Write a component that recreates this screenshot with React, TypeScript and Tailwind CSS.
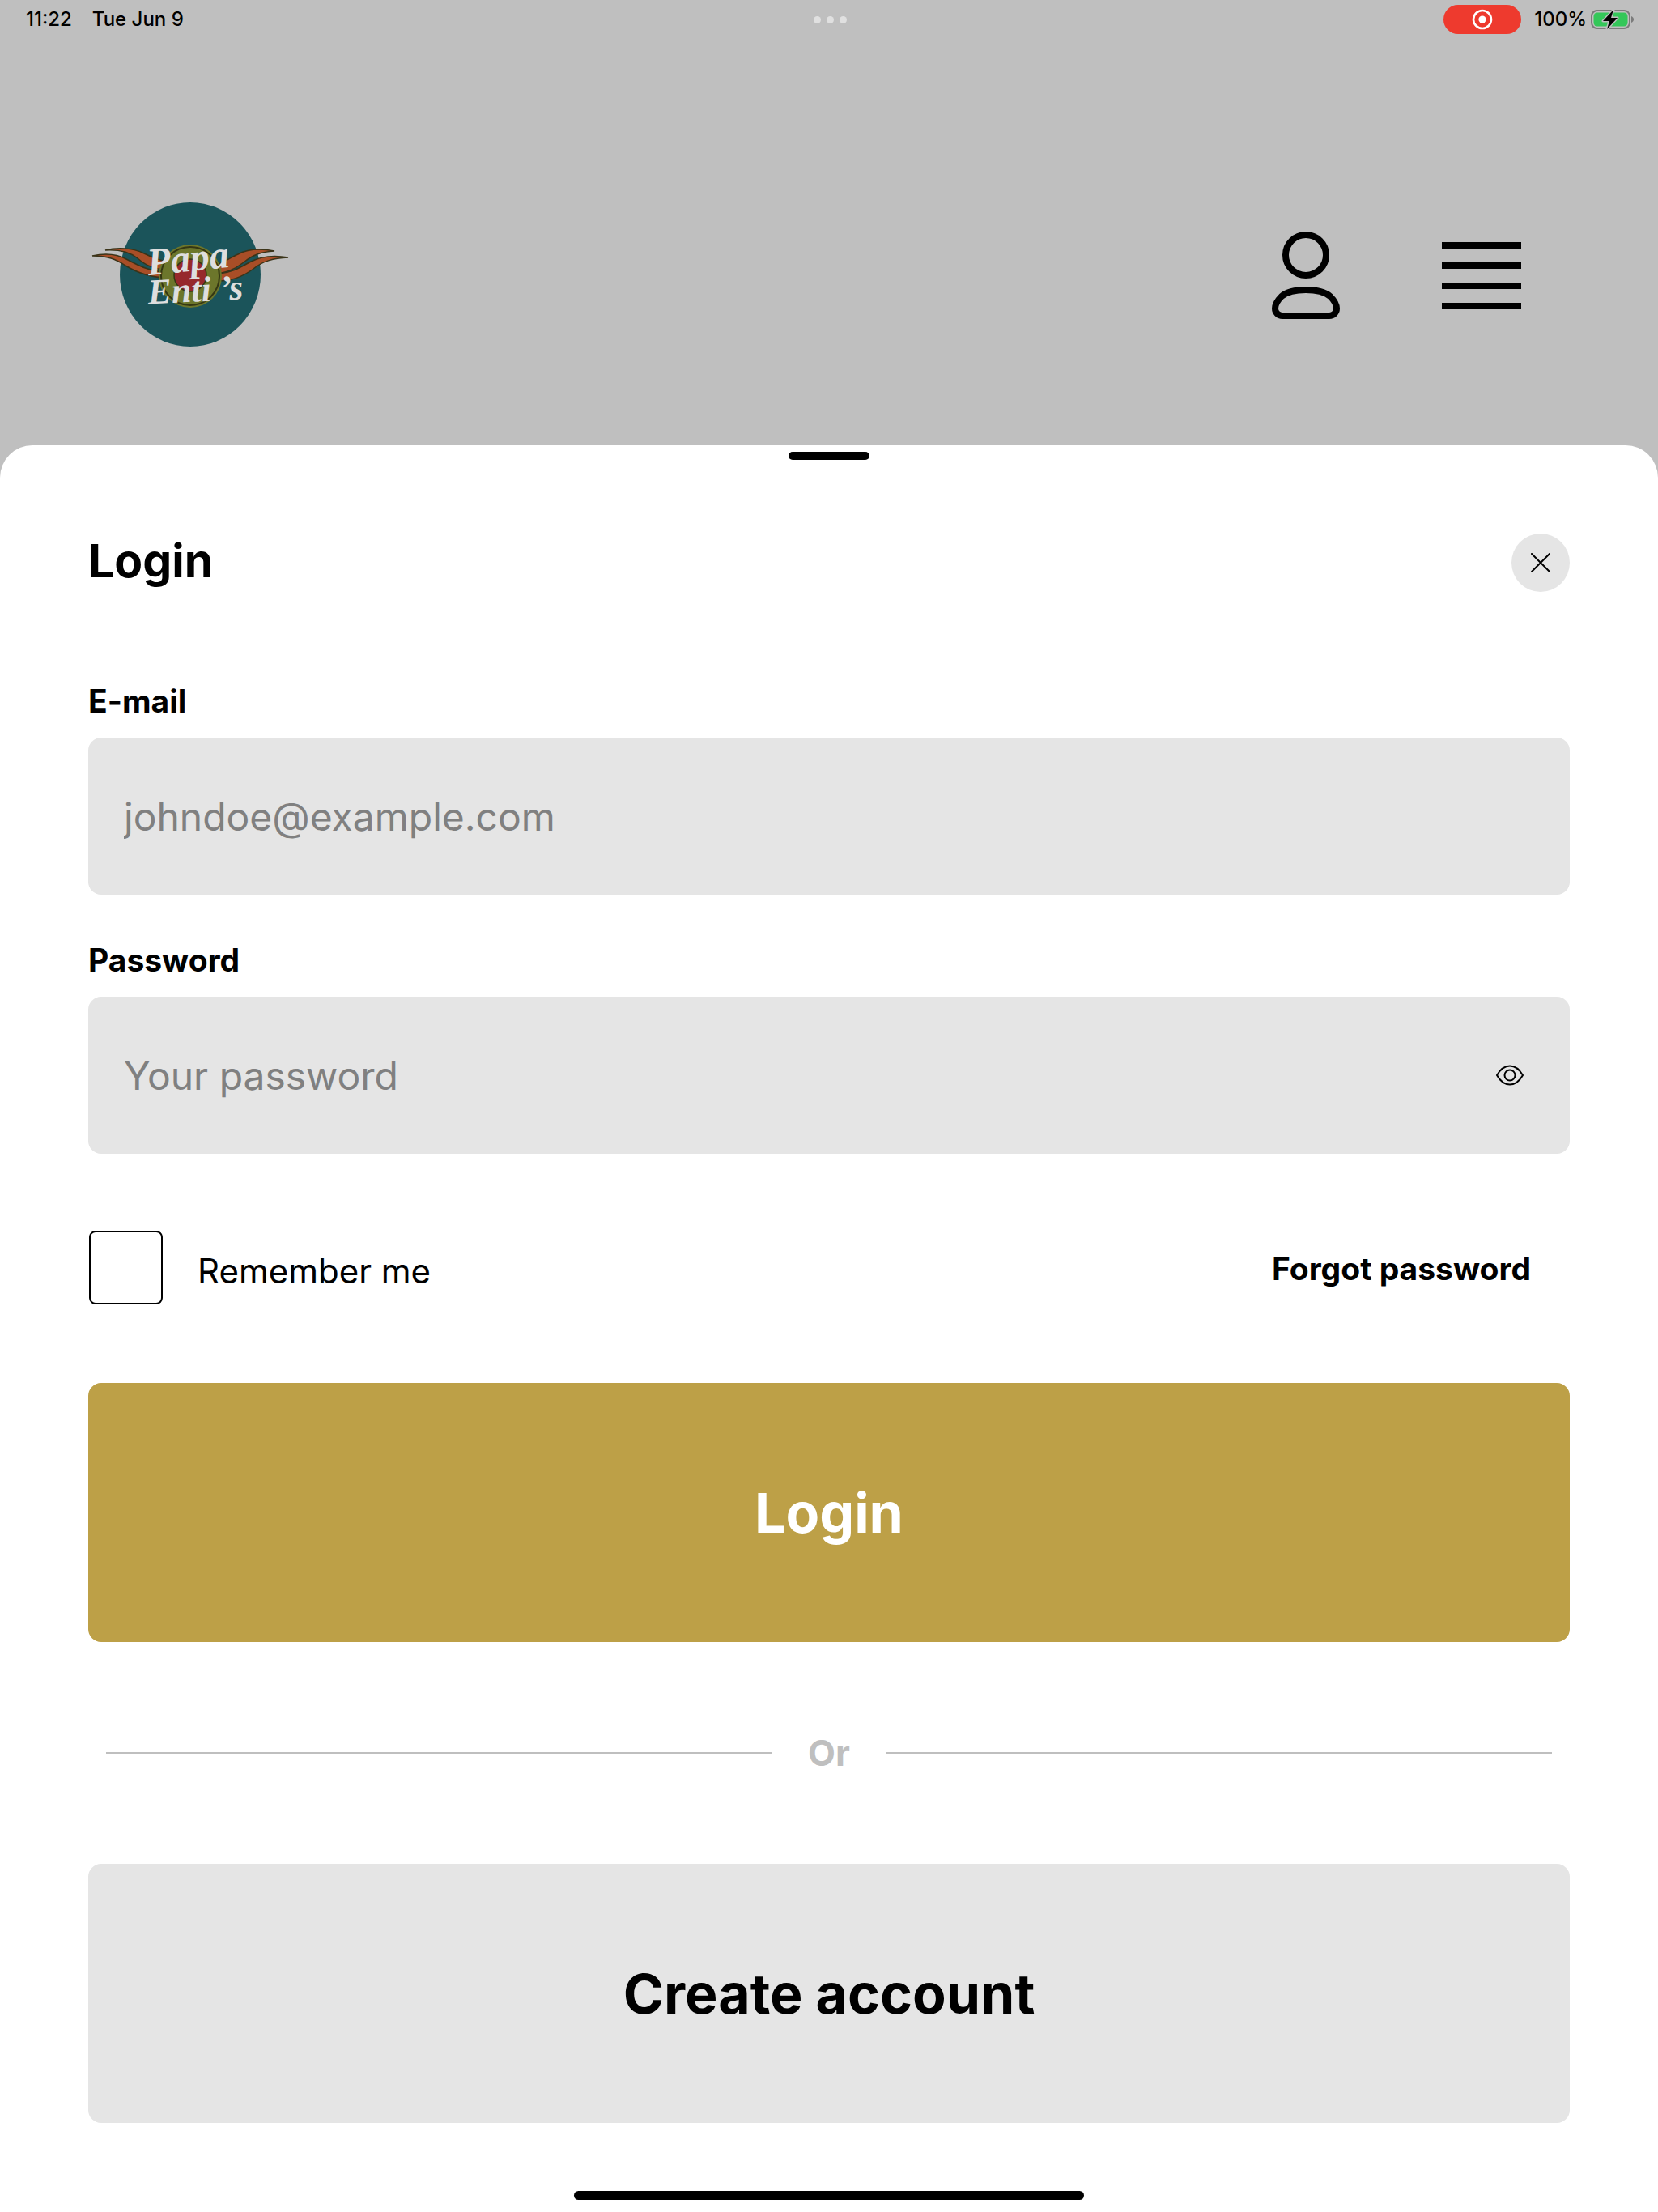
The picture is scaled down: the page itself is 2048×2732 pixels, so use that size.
import { useState } from "react";
import type { InputHTMLAttributes, ReactNode } from "react";

interface FieldProps extends InputHTMLAttributes<HTMLInputElement> {
  id: string;
  label: string;
  trailing?: ReactNode;
}

function StatusBar() {
  return (
    <div className="flex h-12 items-center justify-between px-[30px] text-[24px] font-medium">
      <div className="flex flex-1 gap-[25px] pl-[2px]">
        <span>11:22</span>
        <span>Tue Jun 9</span>
      </div>
      <div className="flex gap-[7px]">
        <span className="h-[9px] w-[9px] rounded-full bg-[#e0e0e0]" />
        <span className="h-[9px] w-[9px] rounded-full bg-[#e0e0e0]" />
        <span className="h-[9px] w-[9px] rounded-full bg-[#e0e0e0]" />
      </div>
      <div className="flex flex-1 items-center justify-end">
        <span className="mr-4 flex h-9 w-24 items-center justify-center rounded-full bg-[#ee3a2e]">
          <svg viewBox="0 0 26 26" className="h-[26px] w-[26px]" aria-hidden="true">
            <circle cx="13" cy="13" r="11" fill="none" stroke="#fff" strokeWidth="2.6" />
            <circle cx="13" cy="13" r="4.6" fill="#fff" />
          </svg>
        </span>
        <span className="mr-1">100%</span>
        <svg viewBox="0 0 54 26" className="h-[26px] w-[54px]" aria-hidden="true">
          <rect x="2" y="2" width="47" height="22" rx="7" fill="none" stroke="#7b7b7b" strokeWidth="2" />
          <rect x="4.5" y="4.5" width="42" height="17" rx="4.5" fill="#34c759" />
          <path d="M51 9c4 1.500 4 6.500 0 8z" fill="#7b7b7b" />
          <path
            d="M29 1 16 15h8l-3 10 13-14h-8z"
            fill="#000"
            stroke="#bfbfbf"
            strokeWidth="3"
            strokeLinejoin="round"
            paintOrder="stroke"
          />
        </svg>
      </div>
    </div>
  );
}

function Logo() {
  return (
    <svg viewBox="0 0 246 182" className="h-[182px] w-[246px]" role="img" aria-label="Papa Enti's">
      <ellipse cx="122" cy="90" rx="87" ry="89" fill="#1b545a" />
      <g fill="#a94e27" stroke="#3a3419" strokeWidth="1.500">
        <path d="M17 60c15-4 34-3 48 4 10 5 17 8 28 10v10c-14 0-26-5-36-14-10-8-22-11-40-10z" />
        <path d="M1 67c14-3 29-3 42 4 17 9 30 16 56 17v6c-22 1-39-4-57-15C30 71 20 67 1 67z" />
        <path d="M226 61c-16-3-32-3-45 4-11 5-19 11-31 15v9c16 0 28-6 38-14 11-9 21-13 38-14z" />
        <path d="M243 69c-17-3-35-1-48 6-14 8-23 13-38 14v9c17 0 31-6 43-15 12-10 25-13 43-14z" />
      </g>
      <circle cx="122" cy="92" r="39" fill="#6c762b" />
      <circle cx="122" cy="92" r="36" fill="none" stroke="#353713" strokeWidth="2" />
      <circle cx="122" cy="91" r="20" fill="#96282c" stroke="#353713" strokeWidth="1.500" />
      <g className="font-['Liberation_Serif',serif] font-bold italic" fill="#dedede">
        <text x="70" y="86" transform="rotate(-6 120 86)" className="text-[48px]">
          Papa
        </text>
        <text x="70" y="124" transform="rotate(-3 120 120)" className="text-[44px]">
          Enti ’s
        </text>
      </g>
    </svg>
  );
}

function Header() {
  return (
    <header className="flex items-center justify-between pl-[113px] pr-[169px] pt-[201px]">
      <Logo />
      <div className="flex items-center gap-[126px]">
        <button type="button" aria-label="Account">
          <svg viewBox="0 0 84 108" className="h-[108px] w-[84px]" fill="none" stroke="#000" strokeWidth="8">
            <circle cx="42" cy="29" r="25" />
            <path d="M42 72c-14 0-23 2-30 8-5 5-8 10-8 15 0 5 4 9 9 9h58c5 0 9-4 9-9 0-5-3-10-8-15-7-6-16-8-30-8z" />
          </svg>
        </button>
        <button type="button" aria-label="Menu" className="flex flex-col gap-[17px]">
          <span className="h-2 w-[98px] bg-black" />
          <span className="h-2 w-[98px] bg-black" />
          <span className="h-2 w-[98px] bg-black" />
          <span className="h-2 w-[98px] bg-black" />
        </button>
      </div>
    </header>
  );
}

function Field({ id, label, trailing, ...rest }: FieldProps) {
  return (
    <div>
      <label htmlFor={id} className="block text-[39px] font-bold leading-[48px]">
        {label}
      </label>
      <div className="mt-[21px] flex h-[194px] items-center rounded-2xl bg-[#e5e5e5] pl-11 pr-14">
        <input
          id={id}
          className="h-full min-w-0 flex-1 bg-transparent text-[48px] outline-none placeholder:text-[#808080]"
          {...rest}
        />
        {trailing}
      </div>
    </div>
  );
}

export default function App() {
  const [showPassword, setShowPassword] = useState(false);

  return (
    <div className="flex min-h-screen flex-col bg-[#bfbfbf] font-['Inter',sans-serif] text-black">
      <StatusBar />
      <Header />

      {/* Bottom sheet */}
      <main className="mt-[119px] flex flex-1 flex-col rounded-t-[40px] bg-white pt-2">
        <div className="mx-auto h-[10px] w-[100px] rounded-full bg-black" />

        <form className="flex flex-col px-[109px] pt-[91px]" onSubmit={(e) => e.preventDefault()}>
          <div className="flex items-start justify-between">
            <h1 className="text-[57px] font-bold leading-[68px]">Login</h1>
            <button
              type="button"
              aria-label="Close"
              className="flex h-[72px] w-[72px] items-center justify-center rounded-full bg-[#e5e5e5]"
            >
              <svg viewBox="0 0 24 24" className="h-6 w-6" fill="none" stroke="#000" strokeWidth="2" strokeLinecap="round">
                <path d="M1 1l22 22M23 1 1 23" />
              </svg>
            </button>
          </div>

          <div className="mt-[111px] flex flex-col gap-[57px]">
            <Field id="email" label="E-mail" type="email" placeholder="johndoe@example.com" />
            <Field
              id="password"
              label="Password"
              type={showPassword ? "text" : "password"}
              placeholder="Your password"
              trailing={
                <button type="button" aria-label="Show password" onClick={() => setShowPassword(!showPassword)}>
                  <svg viewBox="0 0 36 28" className="h-7 w-9" fill="none" stroke="#000" strokeWidth="2">
                    <path d="M2 14C6 7 11 2.500 18 2.500S30 7 34 14c-4 7-9 11.500-16 11.500S6 21 2 14z" strokeLinejoin="round" />
                    <circle cx="18" cy="14" r="6.500" />
                  </svg>
                </button>
              }
            />
          </div>

          <div className="mt-[95px] flex items-center justify-between pr-12">
            <div className="flex items-center gap-[43px]">
              <input
                id="remember"
                type="checkbox"
                className="ml-px h-[91px] w-[91px] appearance-none rounded-lg border-2 border-black checked:bg-[#bda047]"
              />
              <label htmlFor="remember" className="pt-2 text-[42px] leading-[52px]">
                Remember me
              </label>
            </div>
            <a href="#forgot" className="pt-[2px] text-[39px] font-bold leading-[48px]">
              Forgot password
            </a>
          </div>

          <button
            type="submit"
            className="mt-[97px] h-80 rounded-2xl bg-[#bda047] text-[68px] font-bold text-white"
          >
            Login
          </button>

          <div className="my-[110px] flex h-[54px] items-center gap-11 px-[22px]">
            <span className="h-[2px] flex-1 bg-[#bfbfbf]" />
            <span className="text-[44px] font-bold leading-[54px] text-[#bfbfbf]">Or</span>
            <span className="h-[2px] flex-1 bg-[#bfbfbf]" />
          </div>

          <button type="button" className="h-80 rounded-2xl bg-[#e5e5e5] text-[68px] font-bold">
            Create account
          </button>
        </form>

        {/* Home indicator */}
        <div className="mx-auto mb-[15px] mt-auto h-[11px] w-[630px] rounded-full bg-black" />
      </main>
    </div>
  );
}
